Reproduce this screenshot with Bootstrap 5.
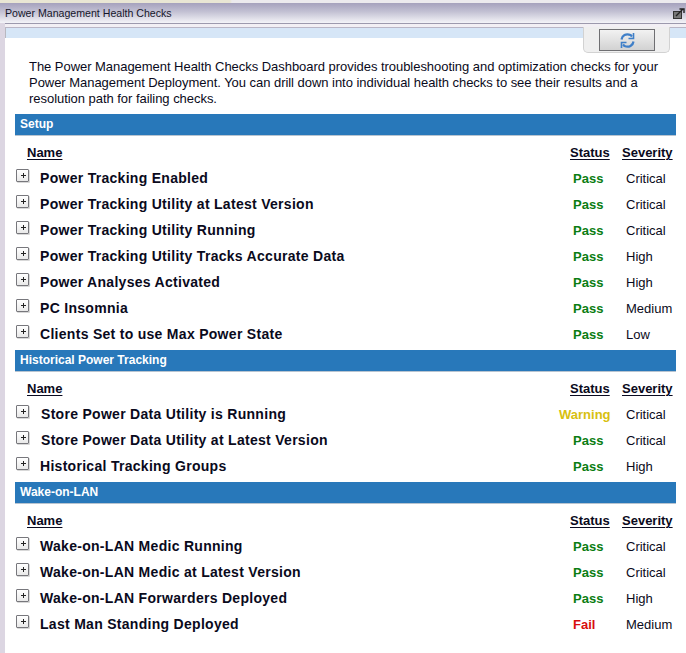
<!DOCTYPE html>
<html lang="en"><head><meta charset="utf-8"><title>Power Management Health Checks</title>
<link href="https://cdn.jsdelivr.net/npm/bootstrap@5.3.0/dist/css/bootstrap.min.css" rel="stylesheet">
<style>
html,body{height:653px;overflow:hidden}
body{font-family:"Liberation Sans",Arial,sans-serif;font-size:13px;color:#0a0a20;background:#fff;width:686px}
.topstrip{height:3px;background:linear-gradient(90deg,#e9e6d4 0,#e9e6d4 230px,#eceaee 232px)}
.titlebar{height:20px;padding:0 0 0 5px;background:linear-gradient(#a5a1bd,#c4c2d4 45%,#f4f4f8);font-size:10.6px;color:#15152a;line-height:20px}
.popout{width:12px;height:11px;margin-right:1px}
.titlerule{height:5px;border-top:1px solid #9c99ad;border-bottom:1px solid #b9b6c6;background:#f2eff4}
.shell{border-left:5px solid #dcd6e2;position:relative;height:630px}
.bluestrip{height:10px;background:#d6e6f7;border-left:1px solid #b8b8c0}
.refreshtab{position:absolute;top:4px;right:16px;width:87px;height:26px;background:#efefef;border:1px solid #d2d2d2;border-top:0;border-radius:0 0 5px 5px}
.refreshbtn{position:absolute;left:15px;top:2px;width:56px;height:22px;background:linear-gradient(#f2f2f2,#d2d2d2);border:1px solid #6f6f72}
.intro{margin:0;padding:21px 0 0 24px;line-height:16px;font-size:13px;letter-spacing:-.04px;height:76px;width:670px}
.secbar{margin-left:10px;width:661px;height:22px;background:#2878ba;border-bottom:1px solid #b8c4d0;color:#fff;font-weight:700;font-size:12px;line-height:21px;padding-left:5px}
.hdrrow{height:32px;margin-left:10px;width:661px;padding-top:9px;font-weight:700;font-size:13px;line-height:16px}
.hdrrow u{text-underline-offset:2px}
.hname{padding-left:12px;flex:1}
.hstat{width:52px;flex:none}
.hsev{width:54px;flex:none}
.chkrow{height:26px;margin-left:11px;width:660px;align-items:flex-start;line-height:16px;padding-top:0}
.plusbox{width:13px;height:13px;flex:none;border:1px solid #77777c;border-radius:1px;background:linear-gradient(#fff,#e9e9e9);margin:1px 1px 0 0;position:relative;box-shadow:1px 1px 0 #d8d8d8}
.plusbox::before{content:"";position:absolute;left:4px;top:5px;width:5px;height:1px;background:#222}
.plusbox::after{content:"";position:absolute;left:6px;top:3px;width:1px;height:5px;background:#222}
.cname{flex:1;padding:2px 0 0 10px;font-weight:700;font-size:14px;letter-spacing:.29px;color:#0a0a1c}
.cname.shift{padding-left:11px}
.cstat{width:53px;flex:none;font-weight:700;font-size:13px;padding:3px 0 0 2px}
.cstat.warn{padding-left:0;margin-left:-12px;width:65px}
.csev{width:52px;flex:none;font-size:13px;padding:3px 0 0 2px;white-space:nowrap}
.ok{color:#0a7d12}.warntxt{color:#d8c010}.bad{color:#d80d0d}
</style></head>
<body>
<div class="topstrip"></div>
<div class="titlebar d-flex align-items-center justify-content-between">
  <span>Power Management Health Checks</span>
  <svg class="popout" viewBox="0 0 12 11"><rect x="0.5" y="3.5" width="8" height="7" fill="#777" stroke="#333"/><path d="M3 8L10 1M6.5 1H11V5" fill="none" stroke="#222" stroke-width="1.4"/></svg>
</div>
<div class="shell">
  <div class="titlerule"></div>
  <div class="bluestrip"></div>
  <div class="refreshtab"><div class="refreshbtn d-flex align-items-center justify-content-center">
    <svg width="15" height="17" viewBox="0 0 15 17" fill="none" stroke="#3f7fc8" stroke-width="2.2"><path d="M1.5 7.5C2 3.5 6 1 10.5 3L12 4.5"/><path d="M13.5 1V6.5H8.5" stroke-width="1.6"/><path d="M13.5 9.5C13 13.5 9 16 4.5 14L3 12.5"/><path d="M1.5 16V10.5H6.5" stroke-width="1.6"/></svg>
  </div></div>
  <p class="intro">The Power Management Health Checks Dashboard provides troubleshooting and optimization checks for your Power Management Deployment. You can drill down into individual health checks to see their results and a resolution path for failing checks.</p>

  <div class="secbar">Setup</div>
  <div class="hdrrow d-flex"><div class="hname"><u>Name</u></div><div class="hstat"><u>Status</u></div><div class="hsev"><u>Severity</u></div></div>
  <div class="chkrow d-flex"><span class="plusbox"></span><div class="cname">Power Tracking Enabled</div><div class="cstat ok">Pass</div><div class="csev">Critical</div></div>
  <div class="chkrow d-flex"><span class="plusbox"></span><div class="cname">Power Tracking Utility at Latest Version</div><div class="cstat ok">Pass</div><div class="csev">Critical</div></div>
  <div class="chkrow d-flex"><span class="plusbox"></span><div class="cname">Power Tracking Utility Running</div><div class="cstat ok">Pass</div><div class="csev">Critical</div></div>
  <div class="chkrow d-flex"><span class="plusbox"></span><div class="cname">Power Tracking Utility Tracks Accurate Data</div><div class="cstat ok">Pass</div><div class="csev">High</div></div>
  <div class="chkrow d-flex"><span class="plusbox"></span><div class="cname">Power Analyses Activated</div><div class="cstat ok">Pass</div><div class="csev">High</div></div>
  <div class="chkrow d-flex"><span class="plusbox"></span><div class="cname">PC Insomnia</div><div class="cstat ok">Pass</div><div class="csev">Medium</div></div>
  <div class="chkrow d-flex"><span class="plusbox"></span><div class="cname">Clients Set to use Max Power State</div><div class="cstat ok">Pass</div><div class="csev">Low</div></div>

  <div class="secbar">Historical Power Tracking</div>
  <div class="hdrrow d-flex"><div class="hname"><u>Name</u></div><div class="hstat"><u>Status</u></div><div class="hsev"><u>Severity</u></div></div>
  <div class="chkrow d-flex"><span class="plusbox"></span><div class="cname shift">Store Power Data Utility is Running</div><div class="cstat warn warntxt">Warning</div><div class="csev">Critical</div></div>
  <div class="chkrow d-flex"><span class="plusbox"></span><div class="cname shift">Store Power Data Utility at Latest Version</div><div class="cstat ok">Pass</div><div class="csev">Critical</div></div>
  <div class="chkrow d-flex"><span class="plusbox"></span><div class="cname">Historical Tracking Groups</div><div class="cstat ok">Pass</div><div class="csev">High</div></div>

  <div class="secbar">Wake-on-LAN</div>
  <div class="hdrrow d-flex"><div class="hname"><u>Name</u></div><div class="hstat"><u>Status</u></div><div class="hsev"><u>Severity</u></div></div>
  <div class="chkrow d-flex"><span class="plusbox"></span><div class="cname">Wake-on-LAN Medic Running</div><div class="cstat ok">Pass</div><div class="csev">Critical</div></div>
  <div class="chkrow d-flex"><span class="plusbox"></span><div class="cname">Wake-on-LAN Medic at Latest Version</div><div class="cstat ok">Pass</div><div class="csev">Critical</div></div>
  <div class="chkrow d-flex"><span class="plusbox"></span><div class="cname">Wake-on-LAN Forwarders Deployed</div><div class="cstat ok">Pass</div><div class="csev">High</div></div>
  <div class="chkrow d-flex"><span class="plusbox"></span><div class="cname">Last Man Standing Deployed</div><div class="cstat bad">Fail</div><div class="csev">Medium</div></div>
</div>
<script src="https://cdn.jsdelivr.net/npm/bootstrap@5.3.0/dist/js/bootstrap.bundle.min.js"></script>
</body></html>
